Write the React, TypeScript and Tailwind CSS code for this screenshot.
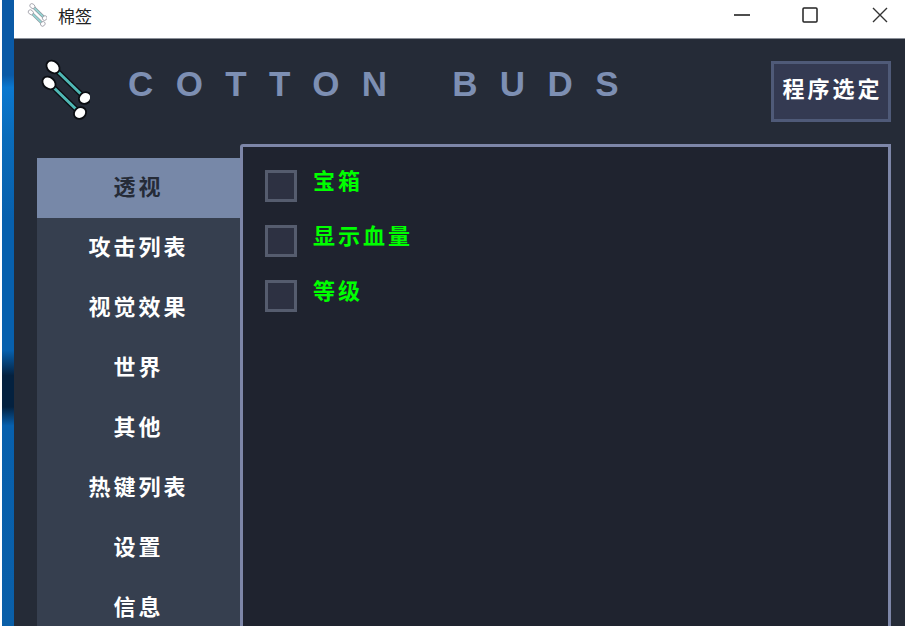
const cjk = "font-['Noto_Sans_CJK_SC','Liberation_Sans',sans-serif]";

const tabs = ['透视', '攻击列表', '视觉效果', '世界', '其他', '热键列表', '设置', '信息'];
const options = ['宝箱', '显示血量', '等级'];

function SwabLogo({ className, outline, stem = 3 }: { className: string; outline: string; stem?: number }) {
    // two cotton buds drawn on a 50x62 box
    const bud = (x1: number, y1: number, x2: number, y2: number) => (
        <g>
            <line x1={x1} y1={y1} x2={x2} y2={y2} stroke={outline} strokeWidth={stem + 2.5} />
            <line x1={x1} y1={y1} x2={x2} y2={y2} stroke="#4fb7b4" strokeWidth={stem} />
            <ellipse cx={x1} cy={y1} rx={7.2} ry={5.6} transform={`rotate(40 ${x1} ${y1})`} fill="#fff" stroke={outline} strokeWidth={1.8} />
            <ellipse cx={x2} cy={y2} rx={6.4} ry={5.6} transform={`rotate(-40 ${x2} ${y2})`} fill="#fff" stroke={outline} strokeWidth={1.8} />
        </g>
    );
    return (
        <svg className={className} viewBox="0 0 50 62" fill="none">
            {bud(13, 8, 45, 39)}
            {bud(9, 24, 40, 54)}
        </svg>
    );
}

export default function App() {
    return (
        <div className={`flex h-[626px] w-[905px] overflow-hidden bg-white ${cjk}`}>
            {/* desktop showing behind the window */}
            <div className="ml-[2px] w-[12px] shrink-0 bg-[linear-gradient(180deg,#0a5aa6_0%,#0a5aa6_12%,#0b78cf_14%,#0a6cba_22%,#0760ad_35%,#0760ad_56%,#04213f_60%,#04213f_65%,#0760ad_68%,#0a5fa8_100%)]" />

            <div className="flex min-w-0 flex-1 flex-col">
                {/* Title bar */}
                <div className="flex h-[39px] shrink-0 items-center justify-between border-b border-[#8a8f98] bg-white pb-[8px]">
                    <div className="flex items-center">
                        <SwabLogo className="ml-[13px] h-[24px] w-[20px] opacity-60" outline="#445" stem={5} />
                        <span className="ml-[11px] text-[17px] leading-none text-[#222]">棉签</span>
                    </div>
                    <div className="flex items-center">
                        <svg className="mr-[52px] h-[16px] w-[16px]" viewBox="0 0 16 16"><path d="M0 8h16" stroke="#222" strokeWidth="1.6" /></svg>
                        <svg className="mr-[54px] h-[16px] w-[16px]" viewBox="0 0 16 16"><rect x="1" y="1" width="14" height="14" rx="1" fill="none" stroke="#222" strokeWidth="1.5" /></svg>
                        <svg className="mr-[17px] h-[16px] w-[16px]" viewBox="0 0 16 16"><path d="M1 1l14 14M15 1L1 15" stroke="#333" strokeWidth="1.4" /></svg>
                    </div>
                </div>

                <div className="flex min-h-0 flex-1 flex-col bg-[#252b37]">
                    {/* Header */}
                    <div className="flex h-[105px] shrink-0 items-start">
                        <SwabLogo className="ml-[26px] mt-[20px] h-[62px] w-[50px]" outline="#0b0d12" />
                        <div className="ml-[38px] mt-[25px] whitespace-pre font-['Liberation_Sans',sans-serif] text-[35px] font-bold leading-[40px] tracking-[22.4px] text-[#7d8fb3] [word-spacing:10.5px]">
                            COTTON BUDS
                        </div>
                        <button className="ml-auto mr-[14px] mt-[22px] flex h-[61px] w-[120px] items-center justify-center border-[3px] border-[#4f5a78] bg-[#343a52] pb-[8px] pl-[3px] text-[22px] font-bold tracking-[3px] text-white">
                            程序选定
                        </button>
                    </div>

                    <div className="flex min-h-0 flex-1 items-stretch pr-[14px]">
                        {/* Tabs */}
                        <div className="ml-[23px] mt-[14px] w-[203px] shrink-0 bg-[#363f4f]">
                            {tabs.map((tab, i) => (
                                <div
                                    key={tab}
                                    className={`flex h-[60px] items-center justify-center pb-[6px] text-[22px] font-bold tracking-[3px] ${i === 0 ? 'bg-[#7788a8] text-[#252b37]' : 'text-white'}`}
                                >
                                    {tab}
                                </div>
                            ))}
                        </div>

                        {/* Panel */}
                        <div className="-mb-[10px] flex-1 rounded-tl-[3px] border-[3px] border-[#7d86a8] bg-[#1f232f] pl-[22px] pt-[23px]">
                            {options.map((opt) => (
                                <div key={opt} className="mb-[23px] flex h-[32px] items-start">
                                    <div className="h-[32px] w-[32px] shrink-0 border-[3px] border-[#555c6e] bg-[#2d3142]" />
                                    <span className="ml-[16px] -mt-[6px] text-[22px] font-bold leading-[30px] tracking-[3px] text-[#00ff00]">{opt}</span>
                                </div>
                            ))}
                        </div>
                    </div>
                </div>
            </div>
        </div>
    );
}
